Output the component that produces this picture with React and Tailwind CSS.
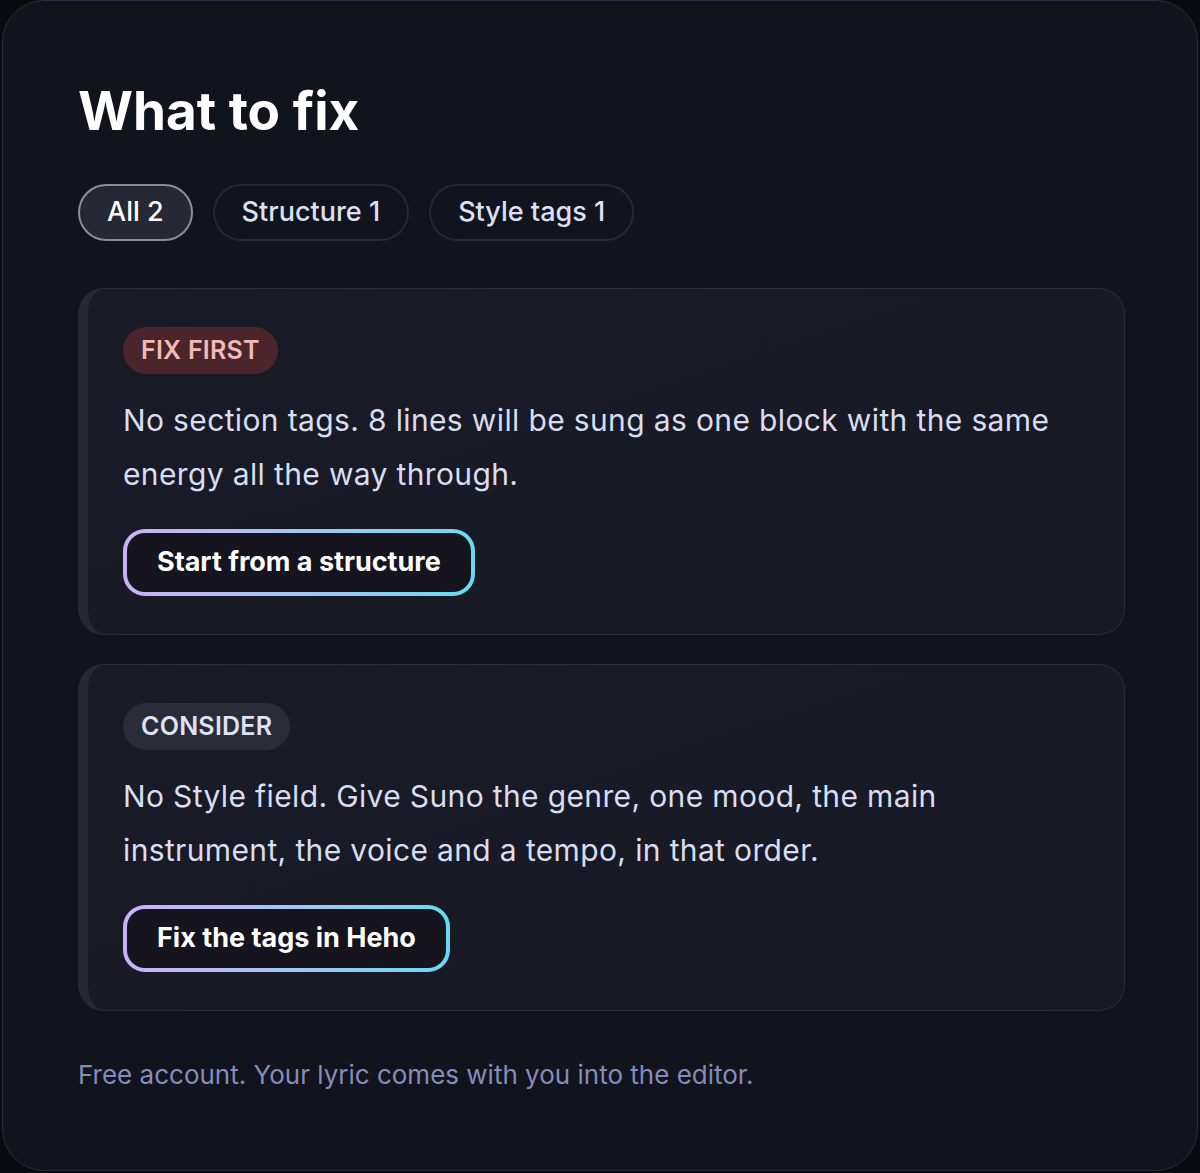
const chips = [
  { label: 'All 2', active: true },
  { label: 'Structure 1' },
  { label: 'Style tags 1' },
];

const issues = [
  {
    level: 'FIX FIRST',
    badge: 'bg-[#4a262c] text-[#f4b9b4]',
    text: 'No section tags. 8 lines will be sung as one block with the same energy all the way through.',
    action: 'Start from a structure',
  },
  {
    level: 'CONSIDER',
    badge: 'bg-[#2a2c38] text-[#dfe2f4]',
    text: 'No Style field. Give Suno the genre, one mood, the main instrument, the voice and a tempo, in that order.',
    action: 'Fix the tags in Heho',
  },
];

function GradientButton({ children }) {
  return (
    <div className="inline-flex rounded-[22px] bg-gradient-to-r from-[#cbb0f7] to-[#66d9f2] p-[4px]">
      <button className="h-[59px] rounded-[18px] bg-[#15141f] px-[30px] text-[27px] font-bold text-white">
        {children}
      </button>
    </div>
  );
}

function IssueCard({ issue }) {
  return (
    <div className="rounded-[26px] border-[1.5px] border-l-[10px] border-[#2a2c38] border-l-[#262833] bg-gradient-to-br from-[#191b27] to-[#171923] pt-[38px] pb-[38px] pl-[35px] pr-[40px]">
      <span className={`inline-flex h-[47px] items-center rounded-full px-[18px] text-[25px] font-semibold tracking-[0.01em] ${issue.badge}`}>
        {issue.level}
      </span>
      <p className="mt-[19px] max-w-[960px] text-[30px] leading-[54px] tracking-[0.012em] text-[#d9ddf2]">{issue.text}</p>
      <div className="mt-[28px]">
        <GradientButton>{issue.action}</GradientButton>
      </div>
    </div>
  );
}

export default function App() {
  return (
    <div className="h-[1173px] bg-[#0a0b11] px-[2px] font-['Inter','Noto_Sans',sans-serif]">
      <div className="h-[1171px] rounded-[42px] border border-[#282a42] bg-[#11131d] pt-[84px] pl-[75px] pr-[72px]">
        {/* 标题 */}
        <h1 className="text-[53px] font-bold leading-none text-white">What to fix</h1>

        {/* 筛选 */}
        <div className="mt-[46px] flex gap-[20px]">
          {chips.map((c) => (
            <button
              key={c.label}
              className={
                c.active
                  ? 'h-[57px] rounded-full border-2 border-[#8a8c98] bg-[#262833] px-[27px] text-[27px] font-medium text-white'
                  : 'h-[57px] rounded-full border-2 border-[#262836] px-[27px] text-[27px] font-medium text-[#dde0f4]'
              }
            >
              {c.label}
            </button>
          ))}
        </div>

        {/* 问题列表 */}
        <div className="mt-[47px] flex flex-col gap-[29px]">
          {issues.map((i) => (
            <IssueCard key={i.level} issue={i} />
          ))}
        </div>

        <p className="mt-[44px] text-[26px] text-[#858cbc]">Free account. Your lyric comes with you into the editor.</p>
      </div>
    </div>
  );
}
